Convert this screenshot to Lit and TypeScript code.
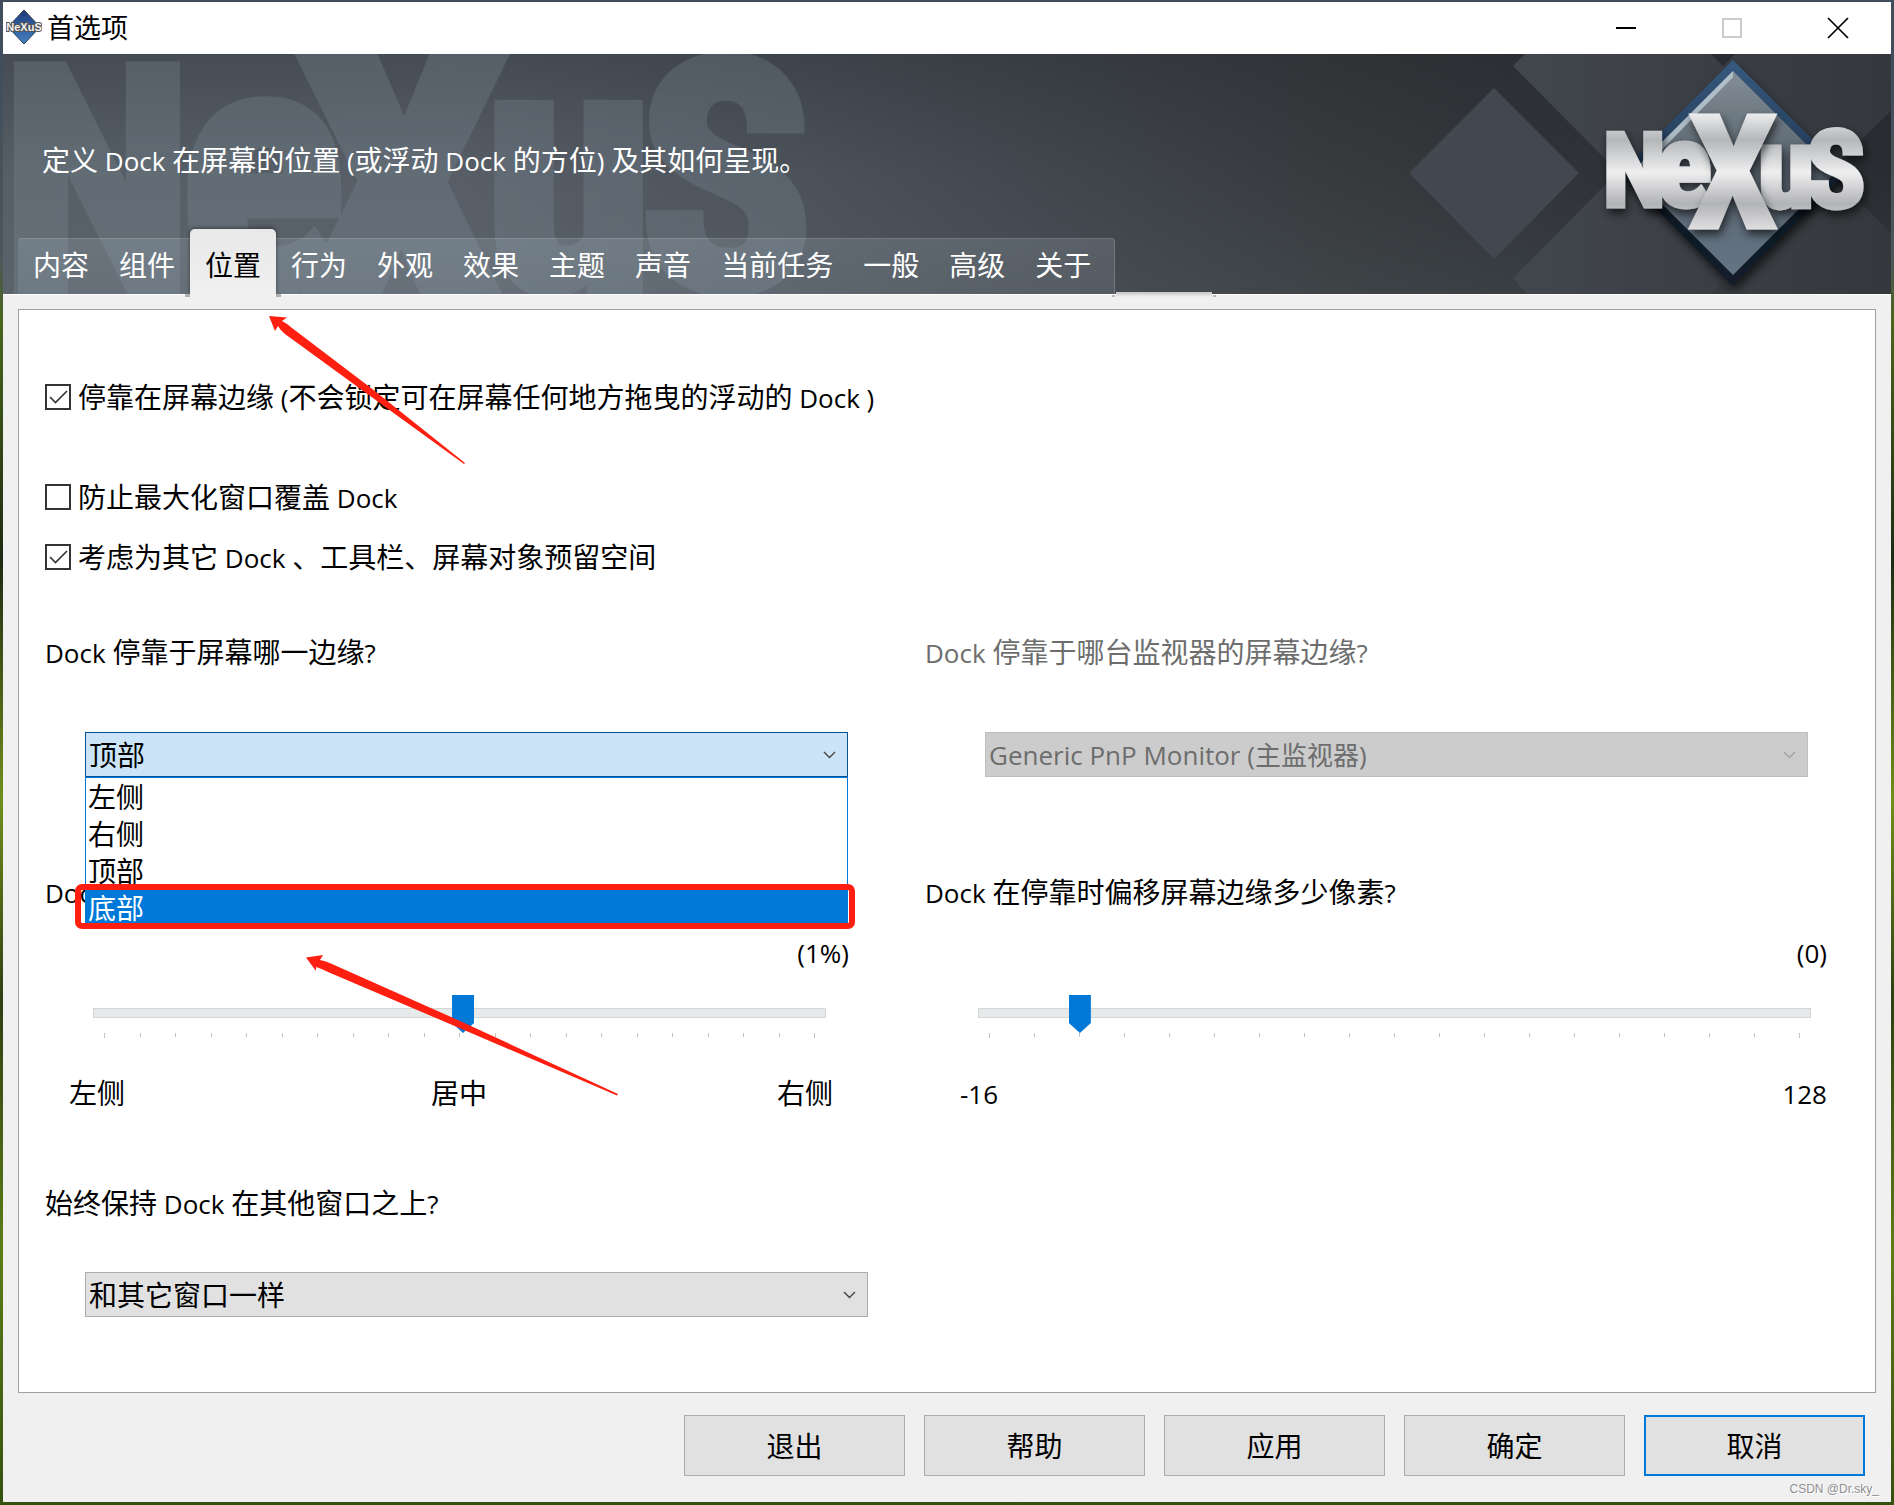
import { LitElement, html, css } from "lit";
import { customElement, property, state } from "lit/decorators.js";
import { classMap } from "lit/directives/class-map.js";

const chevron = html`<svg class="chevron" width="13" height="8" viewBox="0 0 13 8" aria-hidden="true">
  <path d="M1 1 L6.5 6.5 L12 1" fill="none" stroke="currentColor" stroke-width="1.4" />
</svg>`;

// Latin runs are set one step smaller than the Chinese text around them.
const latin = css`
  .latin { font-size: 26px; line-height: 1; }
`;
const mixed = (text: string) =>
  text.split(/([\x20-\x7e]+)/).map((run) => (/^[\x20-\x7e]+$/.test(run) ? html`<span class="latin">${run}</span>` : run));

@customElement("pref-check")
class PrefCheck extends LitElement {
  @property() label = "";
  @property({ type: Boolean }) checked = false;

  static styles = [
    latin,
    css`
      :host { display: block; }
      .row { display: flex; width: fit-content; align-items: center; gap: 7px; line-height: 40px; }
      .box { display: grid; width: 26px; height: 26px; }
      .box > * { grid-area: 1 / 1; }
      .input { appearance: none; margin: 0; width: 26px; height: 26px; border: 2px solid #333; background: #fff; }
      .mark { pointer-events: none; }
    `,
  ];

  private toggle(e: Event) {
    this.checked = (e.target as HTMLInputElement).checked;
  }

  render() {
    return html`<label class="row">
      <span class="box">
        <input class="input" type="checkbox" .checked=${this.checked} @change=${this.toggle} />
        ${this.checked
          ? html`<svg class="mark" width="26" height="26" viewBox="0 0 26 26" aria-hidden="true">
              <path d="M5 13 L10.5 18.5 L22 7" fill="none" stroke="#333" stroke-width="1.6" />
            </svg>`
          : ""}
      </span>
      <span>${mixed(this.label)}</span>
    </label>`;
  }
}

@customElement("pref-slider")
class PrefSlider extends LitElement {
  @property() name = "";
  @property({ type: Number }) min = 0;
  @property({ type: Number }) max = 100;
  @property({ type: Number }) value = 0;
  @property({ type: Number }) ticks = 11;

  static styles = css`
    :host { display: block; }
    .range { appearance: none; display: block; width: 100%; height: 38px; margin: 0; background: none; }
    .range::-webkit-slider-runnable-track {
      height: 10px; box-sizing: border-box; background: #e7eaea; border: 1px solid #d6d6d6;
    }
    .range::-webkit-slider-thumb {
      appearance: none; width: 22px; height: 38px; margin-top: -14px; background: #0078d7;
      clip-path: polygon(0 0, 100% 0, 100% 74%, 50% 100%, 0 74%);
    }
    .ticks { display: flex; justify-content: space-between; margin: 1px 11px 0; height: 5px; }
    .tick { width: 1px; height: 4px; background: #c4c4c4; }
    .tick:first-child, .tick:last-child { height: 5px; }
  `;

  render() {
    return html`<input class="range" type="range" aria-label=${this.name} .min=${String(this.min)}
        .max=${String(this.max)} .value=${String(this.value)} />
      <div class="ticks">${Array.from({ length: this.ticks }, () => html`<span class="tick"></span>`)}</div>`;
  }
}

@customElement("nexus-banner")
class NexusBanner extends LitElement {
  static styles = css`
    :host { display: block; position: absolute; inset: 0; overflow: hidden;
      background:
        linear-gradient(180deg, rgba(30, 34, 38, 0.3), rgba(30, 34, 38, 0) 50%, rgba(120, 132, 140, 0.12)),
        linear-gradient(90deg, #565e66 0, #575e67 24%, #4b525a 42%, #41464d 56%, #373b3e 70%, #303438 82%, #292c30 100%);
    }
    .mark { position: absolute; left: 0; top: 0; }
    .logo { position: absolute; right: 0; top: 0; }
    .face { font-family: "Liberation Sans Narrow", "Roboto Condensed", "Liberation Sans", sans-serif; font-weight: 700; }
  `;

  render() {
    return html`
      <svg class="mark" width="840" height="240" viewBox="3 54 840 240" aria-hidden="true">
        <g class="face" fill="#7d8c97" stroke="#7d8c97" opacity="0.3" stroke-width="12">
          <text x="2" y="288" font-size="310">N</text>
          <text x="180" y="288" font-size="345">e</text>
          <text x="402" y="340" font-size="440" text-anchor="middle">X</text>
          <text x="484" y="288" font-size="345">u</text>
          <text x="640" y="288" font-size="320">S</text>
        </g>
      </svg>
      <svg class="logo" width="520" height="240" viewBox="1371 54 520 240" aria-hidden="true">
        <defs>
          <linearGradient id="tile" x1="0" x2="1"><stop offset="0" stop-color="#42474e" /><stop offset="0.45" stop-color="#3c4045" /><stop offset="1" stop-color="#34373b" /></linearGradient>
          <linearGradient id="gem" x1="0" y1="0" x2="0" y2="1"><stop offset="0" stop-color="#838e97" /><stop offset="0.45" stop-color="#59646e" /><stop offset="1" stop-color="#647484" /></linearGradient>
          <linearGradient id="rim" x1="0" y1="0" x2="0" y2="1"><stop offset="0" stop-color="#375a80" /><stop offset="0.5" stop-color="#20364f" /><stop offset="0.6" stop-color="#101822" /><stop offset="1" stop-color="#121d2a" /></linearGradient>
          <linearGradient id="metal" gradientUnits="userSpaceOnUse" x1="0" y1="110" x2="0" y2="230">
            <stop offset="0" stop-color="#f4f4f5" /><stop offset="0.25" stop-color="#b4b6b9" /><stop offset="0.52" stop-color="#efeff0" /><stop offset="0.78" stop-color="#b2b3b6" /><stop offset="1" stop-color="#e0e0e1" />
          </linearGradient>
          <filter id="drop" x="-20%" y="-20%" width="150%" height="150%"><feDropShadow dx="2" dy="5" stdDeviation="5" flood-color="#000" flood-opacity="0.65" /></filter>
        </defs>
        <path d="M1494 88 L1579 173 L1494 259 L1409 173 Z" fill="#43474f" />
        <path d="M1525 54 H1711 L1723 66 L1735 54 H1891 V111 L1829 172 L1891 233 V294 H1735 L1723 282 L1711 294 H1527 L1513 278 L1618 172 L1513 66 Z" fill="url(#tile)" />
        <g filter="url(#drop)">
          <path d="M1733 60 L1846 173 L1733 286 L1620 173 Z" fill="url(#rim)" />
          <path d="M1733 71 L1835 173 L1733 275 L1631 173 Z" fill="url(#gem)" />
          <path d="M1733 71 L1640 164 L1644 168 L1733 77 Z" fill="#c3d2de" opacity="0.75" />
        </g>
        <g class="face" fill="url(#metal)" stroke="url(#metal)" stroke-width="5" filter="url(#drop)">
          <text x="1603" y="206" font-size="102">N</text>
          <text x="1656" y="206" font-size="116">e</text>
          <text x="1758" y="207" font-size="114">u</text>
          <text x="1807" y="207" font-size="108">S</text>
        </g>
        <g class="face" fill="url(#metal)" stroke="url(#metal)" stroke-width="5" filter="url(#drop)">
          <text x="1733" y="227" font-size="156" text-anchor="middle">X</text>
        </g>
      </svg>
    `;
  }
}

@customElement("app-root")
class AppRoot extends LitElement {
  @state() private tab = "位置";

  private tabs = ["内容", "组件", "位置", "行为", "外观", "效果", "主题", "声音", "当前任务", "一般", "高级", "关于"];
  private edges = ["左侧", "右侧", "顶部", "底部"];
  private actions = ["退出", "帮助", "应用", "确定", "取消"];

  static styles = [
    latin,
    css`
      :host {
        display: flex; flex-direction: column; box-sizing: border-box; min-height: 100vh; position: relative;
        padding: 2px 3px 3px;
        background: linear-gradient(180deg, #3f4d5c 0, #3f4d5c 54px, #4e565a 260px, #4a661c 320px, #1d2a12 560px, #6f8f1c 800px, #2e3f12 1000px, #5d7d18 1250px, #34500f 100%);
        font-family: "Open Sans", "Noto Sans CJK SC", sans-serif; font-size: 28px; line-height: 40px; color: #000;
      }
      button, select { font: inherit; color: inherit; }
      .window { flex: 1; display: flex; flex-direction: column; background: #f0f0f0; }

      .titlebar { display: flex; align-items: center; height: 52px; background: #fff; padding-left: 3px; }
      .title { flex: 1; margin: 0 0 0 5px; font-size: 27px; font-weight: 400; }
      .sys { width: 106px; height: 52px; padding: 0; border: 0; background: none; display: grid; place-items: center; }

      .header { position: relative; height: 240px; box-sizing: border-box; display: flex; flex-direction: column; padding-top: 86px; box-shadow: 0 1px 0 #fff; }
      .intro { position: relative; flex: 1; margin: 0; padding-left: 39px; color: #fff; }
      .tabs {
        position: relative; align-self: flex-start; display: flex; margin-left: 15px; height: 56px; box-sizing: border-box;
        padding-right: 8px; border: 1px solid rgba(255, 255, 255, 0.16); border-bottom: 0; border-left-width: 0; border-radius: 4px 4px 0 0;
        background: linear-gradient(180deg, rgba(190, 205, 215, 0.18), rgba(190, 205, 215, 0.12));
      }
      .tabs::after {
        content: ""; position: absolute; left: calc(100% - 2px); bottom: -3px; width: 104px; height: 5px;
        background:
          linear-gradient(#b8b8b8, #b8b8b8) 0 100% / 3px 2px no-repeat,
          linear-gradient(#b8b8b8, #b8b8b8) 100% 100% / 3px 2px no-repeat,
          linear-gradient(#c4c4c4, #f0f0f0) 4px 0 / 96px 100% no-repeat;
      }
      .tab { border: 0; background: none; padding: 0 15px; color: #fff; height: 52px; }
      .tab.active { position: relative; z-index: 1; color: #000; background: linear-gradient(180deg, #e8e8e8, #f0f0f0); height: 68px; margin-top: -10px; padding-top: 4px; border-radius: 5px 5px 0 0; box-shadow: 0 -1px 4px rgba(0, 0, 0, 0.45); clip-path: inset(-6px -6px 0 -6px); }
      .tab.active::before {
        content: ""; position: absolute; left: -5px; right: -5px; bottom: 0; height: 3px; z-index: -1;
        background:
          linear-gradient(#b0b0b0, #b0b0b0) 0 0 / 5px 100% no-repeat,
          linear-gradient(#b0b0b0, #b0b0b0) 100% 0 / 5px 100% no-repeat;
      }

      .panel { flex: 1; margin: 15px 15px 0; border: 1px solid #a0a0a0; background: #fff; padding: 67px 26px 75px; }
      .checks { display: grid; }
      .second { margin-top: 60px; }
      .third { margin-top: 20px; }
      .columns { display: grid; grid-template-columns: 880fr 924fr; }
      .question { display: block; margin: 55px 0 60px; }
      .question.offset { margin: 95px 0 20px; }
      .question.disabled { color: #6d6d6d; }
      .question.layer { margin: 70px 0 49px; }

      .combo { position: relative; }
      .left .combo { margin: 0 77px 0 40px; }
      .right .combo { margin: 0 41px 0 60px; }
      .layering .combo { margin: 0 57px 0 40px; }
      .select {
        appearance: none; display: block; width: 100%; height: 45px; box-sizing: border-box; margin: 0; padding: 0 40px 0 3px;
        border: 1px solid #adadad; border-radius: 0; background: #e1e1e1; line-height: 40px;
      }
      .select.open { background: #cce4f7; border-color: #005499; }
      .select:disabled { background: #ccc; border-color: #bfbfbf; color: #6d6d6d; opacity: 1; font-size: 26px; }
      .chevron { position: absolute; right: 12px; top: 19px; color: #444; pointer-events: none; }
      .right .chevron { color: #a0a0a0; }
      .list { position: absolute; z-index: 2; left: 0; right: 0; top: 45px; margin: 0; padding: 0; list-style: none; background: #fff; border: 1px solid #0078d7; }
      .item { height: 37px; line-height: 38px; padding-left: 2px; }
      .item.picked { background: #0078d7; color: #fff; }
      .highlight { position: absolute; z-index: 3; left: -10px; right: -7px; top: 152px; height: 45px; box-sizing: border-box; border: 6px solid #ff1f10; border-radius: 7px; }

      .value { text-align: right; margin-bottom: 22px; }
      .left .value { margin-right: 76px; }
      .right .value { margin-right: 22px; }
      .left .slider { margin: 0 99px 0 48px; }
      .right .slider { margin: 0 38px 0 53px; }
      .scale { display: grid; grid-template-columns: 1fr auto 1fr; margin-top: 35px; }
      .left .scale { margin-left: 24px; margin-right: 76px; }
      .right .scale { margin-left: 35px; margin-right: 22px; }
      .scale > :last-child { text-align: right; }
      .left .scale > :last-child { padding-right: 16px; }

      .footer { display: grid; grid-template-columns: repeat(5, 221px); justify-content: end; gap: 19px; padding: 22px 26px 26px; }
      .action { height: 61px; padding: 0; border: 1px solid #adadad; background: #e1e1e1; }
      .action.default { border: 2px solid #0078d7; }

      .arrows { position: absolute; left: 0; top: 0; z-index: 4; pointer-events: none; }
      .credit { position: absolute; right: 15px; bottom: 6px; font: 12px/20px "Liberation Sans", sans-serif; color: #8f8f8f; text-shadow: 1px 1px 0 #fff; }
      .mini { font: 700 11px "Liberation Sans Narrow", "Liberation Sans", sans-serif; }
    `,
  ];

  private appIcon() {
    return html`<svg width="36" height="38" viewBox="0 0 36 38" aria-hidden="true">
      <defs><linearGradient id="g" x1="0" y1="0" x2="0" y2="1"><stop offset="0" stop-color="#1d3a78"/><stop offset="1" stop-color="#4583c4"/></linearGradient></defs>
      <path d="M18 1 L34 18 L18 35 L2 18 Z" fill="url(#g)" stroke="#24384f" stroke-width="1"/>
      <text class="mini" x="18" y="22" text-anchor="middle" fill="#f2f2f2" stroke="#555" stroke-width="2" paint-order="stroke">NeXuS</text>
    </svg>`;
  }

  private slider(name: string, value: number, unit: string, min: number, max: number, ticks: number, scale: string[]) {
    return html`<div class="value">${mixed(`(${value}${unit})`)}</div>
      <pref-slider class="slider" .name=${name} .min=${min} .max=${max} .value=${value} .ticks=${ticks}></pref-slider>
      <div class="scale">${scale.map((s) => html`<span>${mixed(s)}</span>`)}</div>`;
  }

  render() {
    return html`
      <div class="window">
        <div class="titlebar">
          ${this.appIcon()}
          <h1 class="title">首选项</h1>
          <button class="sys" aria-label="最小化"><svg width="22" height="22"><path d="M1 11 H21" stroke="#000" stroke-width="2" /></svg></button>
          <button class="sys" aria-label="最大化" disabled><svg width="22" height="22"><rect x="2" y="2" width="18" height="18" fill="none" stroke="#ccc" stroke-width="2" /></svg></button>
          <button class="sys" aria-label="关闭"><svg width="22" height="22"><path d="M1 1 L21 21 M21 1 L1 21" stroke="#000" stroke-width="1.7" /></svg></button>
        </div>

        <header class="header">
          <nexus-banner></nexus-banner>
          <p class="intro">${mixed("定义 Dock 在屏幕的位置 (或浮动 Dock 的方位) 及其如何呈现。")}</p>
          <nav class="tabs" role="tablist">
            ${this.tabs.map(
              (t) => html`<button role="tab" aria-selected=${t === this.tab} class=${classMap({ tab: true, active: t === this.tab })}
                @click=${() => (this.tab = t)}>${t}</button>`
            )}
          </nav>
        </header>

        <main class="panel">
          <div class="checks">
            <pref-check checked label="停靠在屏幕边缘 (不会锁定可在屏幕任何地方拖曳的浮动的 Dock )"></pref-check>
            <pref-check class="second" label="防止最大化窗口覆盖 Dock"></pref-check>
            <pref-check class="third" checked label="考虑为其它 Dock 、工具栏、屏幕对象预留空间"></pref-check>
          </div>

          <div class="columns">
            <section class="left">
              <label class="question" for="edge">${mixed("Dock 停靠于屏幕哪一边缘?")}</label>
              <div class="combo">
                <select id="edge" class="select open">
                  ${this.edges.map((e) => html`<option ?selected=${e === "顶部"}>${e}</option>`)}
                </select>
                ${chevron}
                <ul class="list" role="listbox" aria-label="Dock">
                  ${this.edges.map(
                    (e) => html`<li role="option" aria-selected=${e === "底部"} class=${classMap({ item: true, picked: e === "底部" })}>${e}</li>`
                  )}
                </ul>
                <div class="highlight"></div>
              </div>
              <div class="question offset">${mixed("Dock")}</div>
              ${this.slider("Dock", 1, "%", -100, 100, 21, ["左侧", "居中", "右侧"])}
            </section>

            <section class="right">
              <label class="question disabled" for="monitor">${mixed("Dock 停靠于哪台监视器的屏幕边缘?")}</label>
              <div class="combo">
                <select id="monitor" class="select" disabled><option>Generic PnP Monitor (主监视器)</option></select>
                ${chevron}
              </div>
              <div class="question offset">${mixed("Dock 在停靠时偏移屏幕边缘多少像素?")}</div>
              ${this.slider("Dock 在停靠时偏移屏幕边缘多少像素?", 0, "", -16, 128, 19, ["-16", "", "128"])}
            </section>

            <section class="layering">
              <label class="question layer" for="layer">${mixed("始终保持 Dock 在其他窗口之上?")}</label>
              <div class="combo">
                <select id="layer" class="select"><option>和其它窗口一样</option></select>
                ${chevron}
              </div>
            </section>
          </div>
        </main>

        <footer class="footer">
          ${this.actions.map((a) => html`<button class=${classMap({ action: true, default: a === "取消" })}>${a}</button>`)}
        </footer>
      </div>

      <svg class="arrows" width="640" height="1110" viewBox="0 0 640 1110" fill="#ff1f10" aria-hidden="true">
        <path d="M269 316 L287 317.5 L282 321 Q288 324 292 328 L371 388 L465 463 L464 464 L366 393 L285 334 Q280 330 278 326 L275 331 Z" />
        <path d="M306 957.5 L323 955 L320 960 Q326 961 332 964 L460 1021 L618 1094 L617 1095.5 L457 1027 L328 972 Q320 968 316 967 L316 971 Z" />
      </svg>
      <div class="credit">CSDN @Dr.sky_</div>
    `;
  }
}
